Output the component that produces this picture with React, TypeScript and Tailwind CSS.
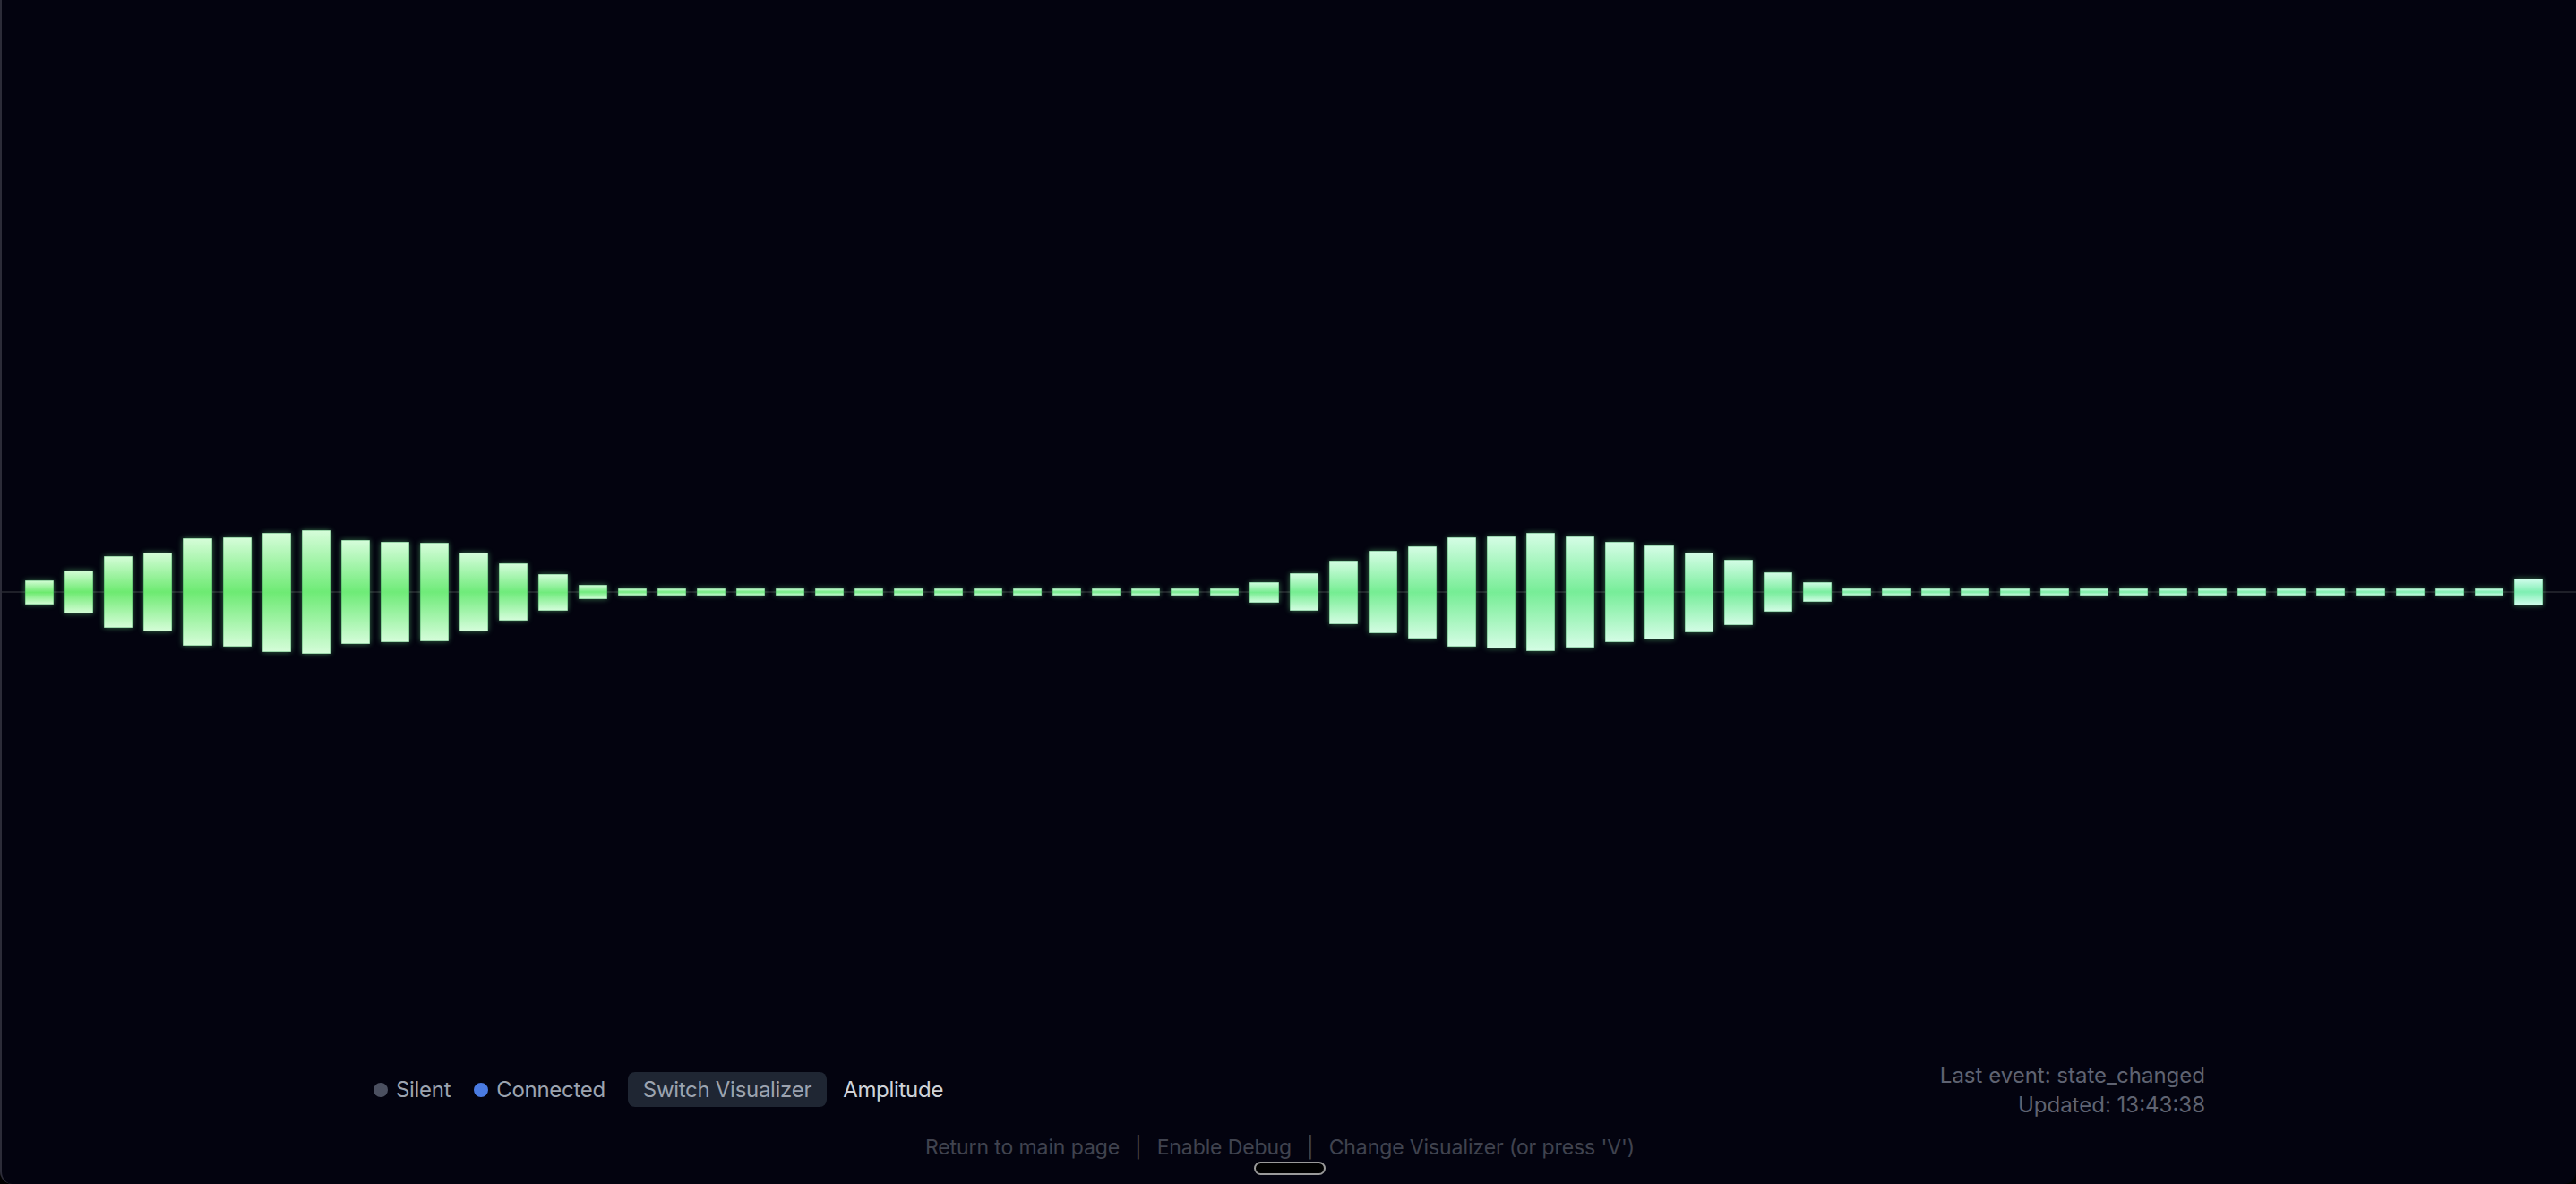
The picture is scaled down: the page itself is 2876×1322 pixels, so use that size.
import { useMemo } from 'react';

const BAR_HEIGHTS = [
  27, 48, 80, 88, 120, 122, 133, 138, 116, 112, 110, 88, 64, 41, 16,
  8, 8, 8, 8, 8, 8, 8, 8, 8, 8, 8, 8, 8, 8, 8, 8,
  23, 42, 71, 92, 103, 122, 125, 132, 124, 112, 105, 89, 73, 44, 22,
  8, 8, 8, 8, 8, 8, 8, 8, 8, 8, 8, 8, 8, 8, 8, 8, 8,
  30,
];

// mix two hex colours, t in 0..1
const mix = (a: string, b: string, t: number) => {
  const pa = [1, 3, 5].map((i) => parseInt(a.slice(i, i + 2), 16));
  const pb = [1, 3, 5].map((i) => parseInt(b.slice(i, i + 2), 16));
  return `rgb(${pa.map((v, i) => Math.round(v + (pb[i] - v) * t)).join(',')})`;
};

const Bar = ({ height, index, total }: { height: number; index: number; total: number }) => {
  const t = index / (total - 1);
  const mid = mix('#6cea6e', '#7eefb2', t);
  const edge = mix('#d6fdd8', '#d4fdee', t);
  return (
    <div
      className="flex-1 rounded-[1px] shadow-[0_0_6px_rgba(110,235,140,0.45),inset_0_0_0_1px_rgba(50,140,80,0.35)]"
      style={{
        height,
        background: `linear-gradient(to bottom, ${edge} 0%, ${mid} 50%, ${edge} 100%)`,
      }}
    />
  );
};

const StatusDot = ({ color, label }: { color: string; label: string }) => (
  <div className="flex items-center gap-[9px]">
    <span className={`h-[16px] w-[16px] rounded-full ${color}`} />
    <span className="text-[#9ca3af]">{label}</span>
  </div>
);

export default function App() {
  const bars = useMemo(() => BAR_HEIGHTS, []);

  return (
    <div className="h-screen w-full bg-black font-['Inter','Liberation_Sans',sans-serif]">
      <div className="relative flex h-full w-full items-center overflow-hidden rounded-b-[14px] border-l-2 border-[#2c2c38] bg-[#03030f]">
        {/* centre line */}
        <div className="absolute inset-x-0 top-1/2 h-[2px] -translate-y-1/2 bg-[#1f2029]" />

        <div className="relative flex w-full items-center gap-[12px] pl-[26px] pr-[37px]">
          {bars.map((h, i) => (
            <Bar key={i} height={h} index={i} total={bars.length} />
          ))}
        </div>

        {/* controls overlay */}
        <div className="absolute inset-x-0 bottom-0 flex flex-col items-center pb-[24px]">
          <div className="flex w-full items-center justify-between pl-[415px] pr-[414px] text-[24px]">
            <div className="flex items-center tracking-[-0.3px]">
              <StatusDot color="bg-[#4b5060]" label="Silent" />
              <div className="ml-[26px]">
                <StatusDot color="bg-[#4a7be2]" label="Connected" />
              </div>
              <button
                type="button"
                className="ml-[25px] h-[39px] rounded-[8px] bg-[#1f2633] px-[17px] text-[#9ca3af]"
              >
                Switch Visualizer
              </button>
              <span className="ml-[18px] text-[#cfd3d9]">Amplitude</span>
            </div>
            <div className="flex flex-col items-end leading-[33px] text-[#5f6372]">
              <span>Last event: state_changed</span>
              <span>Updated: 13:43:38</span>
            </div>
          </div>

          <div className="mt-[14px] mr-[20px] flex items-center text-[23px] tracking-[-0.1px] text-[#40434f]">
            <span>Return to main page</span>
            <span className="mx-[17px]">|</span>
            <span className="relative">
              Enable Debug
              <span className="absolute left-[108px] top-[33px] h-[15px] w-[80px] rounded-full border-2 border-[#9a9a9a] bg-black" />
            </span>
            <span className="mx-[17px]">|</span>
            <span>Change Visualizer (or press 'V')</span>
          </div>
        </div>
      </div>
    </div>
  );
}
